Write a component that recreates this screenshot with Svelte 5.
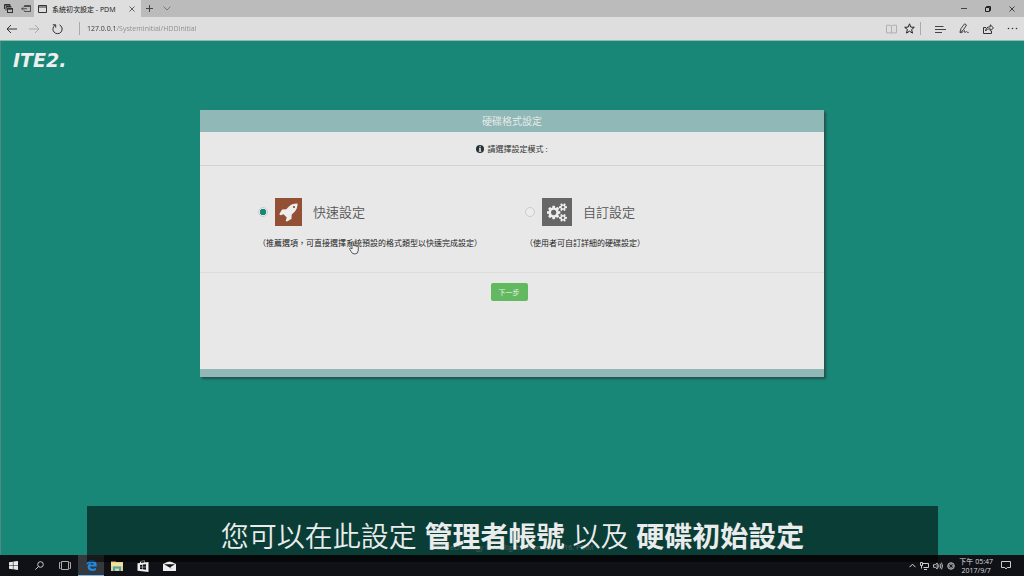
<script>
  let mode = $state('quick');
  let address = $state('127.0.0.1/SystemInitial/HDDInitial');

  const rocket =
    'M1440 448q0-40-28-68t-68-28-68 28-28 68 28 68 68 28 68-28 28-68zm224-288q0 249-75.5 430.5t-253.5 360.5q-81 80-195 176l-20 379q-2 16-16 26l-384 224q-7 4-16 4-12 0-23-9l-64-64q-13-14-8-32l85-276-281-281-276 85q-3 1-9 1-14 0-23-9l-64-64q-17-19-5-39l224-384q10-14 26-16l379-20q96-114 176-195 188-187 358-258t431-71q14 0 24 9.5t10 22.5z';
  const cogs =
    'M896 896q0-106-75-181t-181-75-181 75-75 181 75 181 181 75 181-75 75-181zm768 512q0-52-38-90t-90-38-90 38-38 90q0 53 37.5 90.5t90.5 37.5 90.5-37.5 37.5-90.5zm0-1024q0-52-38-90t-90-38-90 38-38 90q0 53 37.5 90.5t90.5 37.5 90.5-37.5 37.5-90.5zm-384 421v185q0 10-7 19.5t-16 10.5l-155 24q-11 35-32 76 34 48 90 115 7 11 7 20 0 12-7 19-23 30-82.5 89.5t-78.5 59.5q-11 0-21-7l-115-90q-37 19-77 31-11 108-23 155-7 24-30 24h-186q-11 0-20-7.5t-10-17.5l-23-153q-34-10-75-31l-118 89q-7 7-20 7-11 0-21-8-144-133-144-160 0-9 7-19 10-14 41-53t47-61q-23-44-35-82l-152-24q-10-1-17-9.5t-7-19.5v-185q0-10 7-19.5t16-10.5l155-24q11-35 32-76-34-48-90-115-7-11-7-20 0-12 7-20 22-30 82-89t79-59q11 0 21 7l115 90q34-18 77-32 11-108 23-154 7-24 30-24h186q11 0 20 7.5t10 17.5l23 153q34 10 75 31l118-89q8-7 20-7 11 0 21 8 144 133 144 160 0 8-7 19-12 16-42 54t-45 60q23 48 34 82l152 23q10 2 17 10.5t7 19.5zm640 533v140q0 16-149 31-12 27-30 52 51 113 51 138 0 4-4 7-122 71-124 71-8 0-46-47t-52-68q-20 2-30 2t-30-2q-14 21-52 68t-46 47q-2 0-124-71-4-3-4-7 0-25 51-138-18-25-30-52-149-15-149-31v-140q0-16 149-31 13-29 30-52-51-113-51-138 0-4 4-7 4-2 35-20t59-34 30-16q8 0 46 46.5t52 67.5q20-2 30-2t30 2q51-71 92-112l6-2q4 0 124 70 4 3 4 7 0 25-51 138 17 23 30 52 149 15 149 31zm0-1024v140q0 16-149 31-12 27-30 52 51 113 51 138 0 4-4 7-122 71-124 71-8 0-46-47t-52-68q-20 2-30 2t-30-2q-14 21-52 68t-46 47q-2 0-124-71-4-3-4-7 0-25 51-138-18-25-30-52-149-15-149-31v-140q0-16 149-31 13-29 30-52-51-113-51-138 0-4 4-7 4-2 35-20t59-34 30-16q8 0 46 46.5t52 67.5q20-2 30-2t30 2q51-71 92-112l6-2q4 0 124 70 4 3 4 7 0 25-51 138 17 23 30 52 149 15 149 31z';
</script>

<div class="screen">
  <header class="tabs">
    <button aria-label="Tabs set aside">
      <svg width="9" height="9" viewBox="0 0 9 9"><path d="M.5 5V.5h5.5V2M2 6.500V2.500h5" fill="none" stroke="#333" /><path d="M.5 1.200h5.500M2 3h5.500" stroke="#333" /><rect x="3.500" y="4.500" width="5" height="4" fill="#bbb" stroke="#333" /><path d="M3.500 5.200h5" stroke="#333" /></svg>
    </button>
    <button aria-label="Set tabs aside">
      <svg width="10" height="8" viewBox="0 0 10 8" fill="none" stroke="#444" stroke-width=".9"><path d="M3.500 2V.5h6v6h-6V5.500M3.500 1.500h6M.5 3.700h5.500M2.500 2 .8 3.700l1.700 1.700" /></svg>
    </button>
    <div class="tab">
      <svg width="9" height="8" viewBox="0 0 9 8" fill="none" stroke="#333"><path d="M.5.5h8v7h-8zM.5 2h8" /></svg>
      <span>系統初次設定 - PDM</span>
      <button aria-label="Close tab">
        <svg width="6" height="6" viewBox="0 0 6 6" stroke="#444" stroke-width=".8"><path d="m.5.5 5 5m0-5-5 5" /></svg>
      </button>
    </div>
    <button aria-label="New tab">
      <svg width="7" height="7" viewBox="0 0 7 7" stroke="#444"><path d="M3.500 0v7M0 3.500h7" /></svg>
    </button>
    <button aria-label="Tab previews">
      <svg width="8" height="5" viewBox="0 0 8 5" fill="none" stroke="#666" stroke-width=".8"><path d="m.5.5 3.500 3.500L7.500.5" /></svg>
    </button>
    <div class="window">
      <button aria-label="Minimize"><svg width="6" height="6" viewBox="0 0 6 6" stroke="#444"><path d="M0 2.500h6" /></svg></button>
      <button aria-label="Restore"><svg width="6" height="6" viewBox="0 0 6 6" fill="none" stroke="#222"><path d="M.5 1.500h4v4h-4zM1.500 1V.5h4v4H5" /></svg></button>
      <button aria-label="Close"><svg width="6" height="6" viewBox="0 0 6 6" stroke="#333" stroke-width=".9"><path d="m.5.5 5 5m0-5-5 5" /></svg></button>
    </div>
  </header>

  <nav class="toolbar">
    <button aria-label="Back"><svg width="11" height="10" viewBox="0 0 11 10" fill="none" stroke="#333"><path d="M11 5H1M5 1 1 5l4 4" /></svg></button>
    <button aria-label="Forward"><svg width="11" height="10" viewBox="0 0 11 10" fill="none" stroke="#aaa"><path d="M0 5h10M6 1l4 4-4 4" /></svg></button>
    <button aria-label="Refresh"><svg width="11" height="12" viewBox="0 0 11 12" fill="none" stroke="#333"><path d="M7.500 1.900a4.600 4.600 0 1 1-4.300.2M.8 1.800h2.900v2.800" /></svg></button>
    <i class="rule"></i>
    <input class="address" type="text" aria-label="Address" bind:value={address} />
    <div class="tools">
      <button aria-label="Reading view"><svg width="11" height="10" viewBox="0 0 11 10" fill="none" stroke="#b0b0b0"><path d="M.5 1.200H4l1.500.8L7 1.200h3.500v7.600H7l-1.500.7L4 8.800H.5zM5.500 2v7" /></svg></button>
      <button aria-label="Favorites"><svg width="11" height="11" viewBox="0 0 11 11" fill="none" stroke="#222" stroke-linejoin="round"><path d="m5.500.8 1.300 3.300 3.500.2-2.700 2.300.9 3.500-3-1.900-3 1.900.9-3.500L.7 4.300l3.500-.2z" /></svg></button>
      <i class="rule"></i>
      <button aria-label="Hub"><svg width="11" height="8" viewBox="0 0 11 8" stroke="#444"><path d="M0 1.500h8.500M0 4.500h11M0 7.500h7" /></svg></button>
      <button aria-label="Web note"><svg width="10" height="11" viewBox="0 0 10 11" fill="none" stroke="#333" stroke-width=".9"><path d="m.8 9.500 1.200-4L5.600.8 7.500 2 4.300 7 1 9.500c2 .7 2.600-.5 4-1.800.9-.6.100 1.500.8 1.700s1-.8 1.600-.8.3 1 2.300.8" /></svg></button>
      <button aria-label="Share"><svg width="11" height="10" viewBox="0 0 11 10" fill="none" stroke="#333"><path d="M3 3.500H.5v6h8V7M2.500 7c.3-3 2-4.200 4.800-4.200V.8l3.200 3.100-3.200 3V4.800C5 4.800 3.700 5.300 2.500 7z" /></svg></button>
      <button aria-label="More"><svg width="11" height="3" viewBox="0 0 11 3" fill="#333"><circle cx="1.500" cy="1.500" r=".8" /><circle cx="5.500" cy="1.500" r=".8" /><circle cx="9.500" cy="1.500" r=".8" /></svg></button>
    </div>
  </nav>

  <main>
    <div class="brand">ITE2.</div>
    <form class="card" onsubmit={(e) => e.preventDefault()}>
      <h1>硬碟格式設定</h1>
      <p class="prompt">
        <svg width="8" height="8" viewBox="0 0 8 8"><circle cx="4" cy="4" r="4" fill="#263238" /><path d="M3.400 1.200h1.400v1.100H3.400zM3 3.100h1.800v2.700h.5v.9H2.800v-.9h.5V4H3z" fill="#e8e8e8" /></svg>
        請選擇設定模式 :
      </p>
      <div class="options">
        <div class="option">
          <label>
            <input type="radio" name="mode" value="quick" bind:group={mode} />
            <span class="tile quick"><svg width="20" height="20" viewBox="0 0 1792 1792"><path d={rocket} fill="#eee" /></svg></span>
            <span>快速設定</span>
          </label>
          <p>（推薦選項，可直接選擇系統預設的格式類型以快速完成設定）</p>
        </div>
        <div class="option">
          <label>
            <input type="radio" name="mode" value="custom" bind:group={mode} />
            <span class="tile custom"><svg width="20" height="19" viewBox="0 0 1920 1792"><path d={cogs} fill="#eee" /></svg></span>
            <span>自訂設定</span>
          </label>
          <p>（使用者可自訂詳細的硬碟設定）</p>
        </div>
      </div>
      <div class="actions"><button>下一步</button></div>
    </form>
    <footer>ITE2 Technology © All Rights Reserved 2016. PDiM</footer>
  </main>

  <div class="taskbar">
    <button aria-label="Start"><svg width="9" height="9" viewBox="0 0 9 9" fill="#e8e8e8"><path d="M0 1.300 3.900.7v3.500H0zM4.400.6 9 0v4.200H4.400zM0 4.700h3.900v3.500L0 7.700zM4.400 4.700H9V9l-4.600-.7z" /></svg></button>
    <button aria-label="Search"><svg width="9" height="9" viewBox="0 0 9 9" fill="none" stroke="#ccc"><circle cx="5.500" cy="3.500" r="2.800" /><path d="M3.500 5.500.3 8.700" /></svg></button>
    <button aria-label="Task view"><svg width="12" height="9" viewBox="0 0 12 9" fill="none" stroke="#aaa"><path d="M2.500.5h7v8h-7zM1.500 1.500h-1v6h1M10.500 1.500h1v6h-1" /></svg></button>
    <button class="active" aria-label="Edge"><svg width="11" height="11" viewBox="0 0 11 11"><path d="M.3 5C.9 1.700 3 0 5.700 0 9 0 10.700 2.400 10.700 5.200v1.200H4c.2 2.600 3.700 2.900 6 1.500v2.200C6.500 11.900 1.600 11 1.600 6.900c0-2 1.100-3.300 2.800-4C2.900 3 1.300 3.600.3 5zM4.100 4.600h3.600c0-2.300-3.200-2.300-3.600 0z" fill="#1f8be0" /></svg></button>
    <button aria-label="File Explorer"><svg width="12" height="10" viewBox="0 0 12 10"><path d="M0 0h4.500l1 1H12v9H0z" fill="#e9cf80" /><path d="M0 2h12v3H0z" fill="#f3df9c" /><path d="M2 10V5.500h8V10H8V7.500H4V10z" fill="#42a9bc" /></svg></button>
    <button aria-label="Store"><svg width="12" height="12" viewBox="0 0 12 12"><path d="m.5 3.200 11-1.200v10l-11-1.300z" fill="#eee" /><path d="M3.500 3V1.400L7.500.6v2" fill="none" stroke="#eee" /><path d="m3 5 2.500-.3v2H3zM6 4.600 9 4.300v2.400H6zM3 7.200h2.500v2L3 9zM6 7.200h3v2.500l-3-.4z" fill="#111318" /></svg></button>
    <button aria-label="Mail"><svg width="13" height="10" viewBox="0 0 13 10"><path d="M0 3 6.500 0 13 3v7H0z" fill="#eee" /><path d="M1 3.300h11L7.200 6.200 9 8 5.800 6z" fill="#111318" /></svg></button>
    <div class="tray">
      <svg width="7" height="5" viewBox="0 0 7 5" fill="none" stroke="#ddd"><path d="m.5 4.200 3-3 3 3" /></svg>
      <svg width="9" height="8" viewBox="0 0 9 8" fill="none" stroke="#ccc"><path d="M2.500 1.500h6v4h-5M4 7.500h3M.5.5h2v3h-2zM1.500 3.500v3" /></svg>
      <svg width="10" height="8" viewBox="0 0 10 8" fill="none" stroke="#ccc" stroke-width=".9"><path d="M.5 2.700h1.700L4.200 1v6l-2-1.700H.5zM5.500 2.500q1 1.500 0 3M7 1.500q1.800 2.500 0 5M8.500.6q2 3.400 0 6.800" /></svg>
      <svg width="8" height="8" viewBox="0 0 8 8"><circle cx="4" cy="4" r="3.300" fill="#777" stroke="#aaa" /><path d="m2.500 2.500 3 3m0-3-3 3" stroke="#181818" /></svg>
      <time datetime="2017-09-07T17:47"><span>下午 05:47</span><span>2017/9/7</span></time>
      <button aria-label="Notifications"><svg width="10" height="9" viewBox="0 0 10 9" fill="none" stroke="#ccc"><path d="M.5.5h9v6H6.200L5 8 3.800 6.500H.5z" /></svg></button>
    </div>
  </div>

  <div class="caption"><p>您可以在此設定 <b>管理者帳號</b> 以及 <b>硬碟初始設定</b></p></div>
  <svg class="pointer" width="10" height="14" viewBox="0 0 10 14"><path d="M3 8V1.500Q3 .6 3.800.6t.8.9V5q.2-.6.8-.6t.8.8q.1-.5.800-.5t.7.8q.2-.4.700-.4.900 0 .9.900V9Q9.300 13 6 13T2.200 10.600L.7 8.300Q.4 7.300 1.300 7.100T3 8z" fill="#eee" stroke="#333" stroke-width=".8" /></svg>
</div>

<style>
  :global(body) { margin: 0; }
  .screen {
    position: relative;
    display: flex;
    flex-direction: column;
    min-height: 100vh;
    overflow: hidden;
    background: #188778;
    font-family: "Open Sans", "Noto Sans CJK TC", sans-serif;
    color: #333;
  }
  button {
    display: flex;
    align-items: center;
    justify-content: center;
    padding: 0;
    border: 0;
    background: none;
    font-family: inherit;
  }
  svg { display: block; flex: none; }

  .tabs { display: flex; align-items: stretch; height: 17px; background: #bbb; }
  .tabs > button { width: 17px; }
  .tab {
    display: flex;
    align-items: center;
    gap: 5px;
    box-sizing: border-box;
    width: 107px;
    padding: 0 6px 0 4px;
    background: #dedede;
    font-size: 7px;
    white-space: nowrap;
    color: #111;
  }
  .tab button { margin-left: auto; }
  .window { display: flex; margin-left: auto; }
  .window button { width: 24px; }

  .toolbar {
    display: flex;
    align-items: center;
    height: 23px;
    border-bottom: 1px solid #8fb8b1;
    background: #dedede;
  }
  .toolbar button { width: 23px; height: 23px; }
  .rule { width: 1px; height: 13px; background: #aaa; }
  .toolbar > .rule { margin: 0 7px 0 10px; }
  .address {
    flex: 1;
    min-width: 0;
    padding: 0;
    border: 0;
    outline: 0;
    background: linear-gradient(90deg, #333 29px, #8a8a8a 29px);
    background-clip: text;
    -webkit-text-fill-color: transparent;
    font: 7px "Open Sans", sans-serif;
  }
  .tools { display: flex; align-items: center; }
  .tools button { width: 24px; }
  .tools button:nth-child(-n + 2) { width: 18px; }
  .tools .rule { margin: 0 7px 0 2px; }

  main {
    display: flex;
    flex: 1;
    flex-direction: column;
    box-sizing: border-box;
    padding: 8px 13px 2px;
    box-shadow: inset 1px 0 #4d8b82;
  }
  .brand {
    height: 61px;
    font: italic bold 19px/22px "DejaVu Sans", sans-serif;
    color: #eee;
  }
  .card {
    align-self: center;
    box-sizing: border-box;
    width: 100%;
    max-width: 624px;
    min-height: 267px;
    border-bottom: 8px solid #8fb8b6;
    background: #e8e8e8;
    box-shadow: 2px 2px 2px #28504d;
  }
  h1 {
    margin: 0;
    background: #8fb8b6;
    font-size: 10px;
    font-weight: 350;
    line-height: 22px;
    text-align: center;
    color: #eee;
  }
  .prompt {
    display: flex;
    align-items: center;
    justify-content: center;
    gap: 3px;
    height: 33px;
    margin: 0;
    border-bottom: 1px solid #d2d2d2;
    font-size: 8px;
  }
  .options {
    display: grid;
    grid-template-columns: 267px 1fr;
    box-sizing: border-box;
    height: 107px;
    padding: 32px 20px 0 58px;
    border-bottom: 1px solid #dcdcdc;
  }
  label {
    display: flex;
    align-items: center;
    font-size: 13px;
    font-weight: 350;
    line-height: 28px;
    color: #555;
  }
  input[type="radio"] {
    appearance: none;
    box-sizing: border-box;
    width: 10px;
    height: 10px;
    margin: 0 7px 0 0;
    border: 1px solid #ccc;
    border-radius: 50%;
    background: #ececec;
  }
  input[type="radio"]:checked { background: radial-gradient(circle, #178878 3px, #e8e8e8 3px); }
  .tile {
    display: flex;
    align-items: center;
    justify-content: center;
    height: 28px;
    margin-right: 11px;
  }
  .quick { width: 27px; background: #935035; }
  .custom { width: 30px; background: #666; }
  .option p {
    margin: 11px 0 0;
    font-size: 8px;
    line-height: 12px;
    white-space: nowrap;
    color: #222;
  }
  .actions { display: flex; justify-content: center; padding: 10px 6px 0 0; }
  .actions button {
    height: 18px;
    padding: 0 8px;
    border: 0;
    border-radius: 2px;
    background: #62b95f;
    font-size: 7px;
    color: #e8f4e8;
  }
  footer {
    margin-top: auto;
    font-size: 7px;
    line-height: 10px;
    text-align: center;
    color: #a9d6d0;
  }

  .taskbar { display: flex; height: 21px; background: #0f1116; color: #ddd; }
  .taskbar > button { width: 26px; }
  .taskbar .active { box-sizing: border-box; border-bottom: 1px solid #76b9ed; background: #35383d; }
  .tray { display: flex; align-items: center; gap: 4px; margin-left: auto; padding-right: 13px; }
  time {
    display: flex;
    flex-direction: column;
    align-items: center;
    margin: 0 4px 0 0;
    font-size: 7px;
    line-height: 9px;
    white-space: nowrap;
  }

  .caption {
    position: absolute;
    right: 86px;
    bottom: 14px;
    left: 87px;
    height: 56px;
    background: rgba(0, 0, 0, 0.55);
  }
  .caption p {
    margin: 0;
    font: 350 28px/64px "Liberation Sans", "Noto Sans CJK TC", sans-serif;
    text-align: center;
    white-space: nowrap;
    color: #e9eceb;
  }
  .caption b { font-weight: 700; }
  .pointer { position: absolute; top: 241px; left: 349px; }
</style>
